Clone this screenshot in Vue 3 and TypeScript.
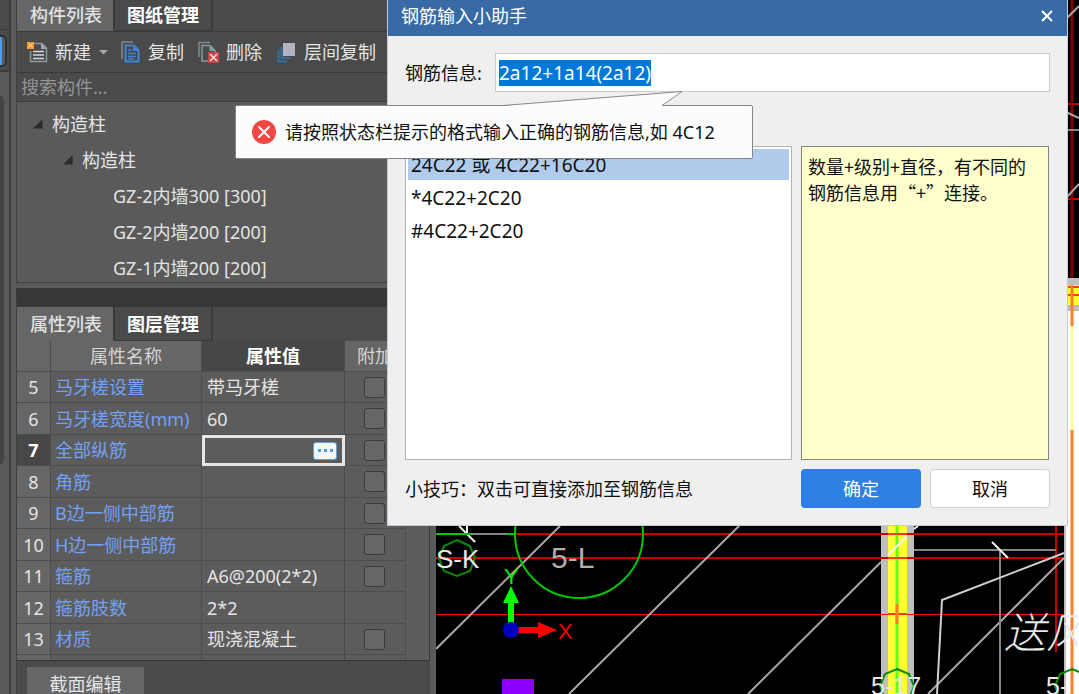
<script setup lang="ts">
import { onMounted, ref } from 'vue'

interface PropertyRow {
  no: number
  name: string
  value: string
  check: boolean
}

const rebar = ref('2a12+1a14(2a12)')
const rebarInput = ref<HTMLInputElement | null>(null)
const current = ref(0)

const members = ['GZ-2内墙300 [300]', 'GZ-2内墙200 [200]', 'GZ-1内墙200 [200]']
const formats = ['24C22 或 4C22+16C20', '*4C22+2C20', '#4C22+2C20']
const note = '数量+级别+直径，有不同的\n钢筋信息用“+”连接。'

const rows: PropertyRow[] = [
  { no: 5, name: '马牙槎设置', value: '带马牙槎', check: true },
  { no: 6, name: '马牙槎宽度(mm)', value: '60', check: true },
  { no: 7, name: '全部纵筋', value: '', check: true },
  { no: 8, name: '角筋', value: '', check: true },
  { no: 9, name: 'B边一侧中部筋', value: '', check: true },
  { no: 10, name: 'H边一侧中部筋', value: '', check: true },
  { no: 11, name: '箍筋', value: 'A6@200(2*2)', check: true },
  { no: 12, name: '箍筋肢数', value: '2*2', check: false },
  { no: 13, name: '材质', value: '现浇混凝土', check: true },
]

onMounted(() => {
  rebarInput.value?.focus()
  rebarInput.value?.select()
})
</script>

<template>
  <div class="app" lang="zh-CN">
    <div class="rail">
      <div class="rail-top"></div>
      <div class="rail-tool"><span class="rail-button"></span></div>
      <div class="rail-body"><span class="rail-thumb"></span></div>
    </div>

    <aside class="dock">
      <section class="members">
        <div class="tabs">
          <button class="tab active" type="button">构件列表</button>
          <button class="tab" type="button">图纸管理</button>
        </div>
        <div class="toolbar">
          <button class="tool" type="button">
            <svg width="22" height="22" viewBox="0 0 22 22">
              <path d="M8 2.5H16L20.5 7V20.5H4.500V10" fill="none" stroke="#8b999f" stroke-width="1.500" />
              <path d="M15 2V8H21Z" fill="#9fabb0" />
              <path d="M7 10.500H18M7 14H18M7 17.500H18" stroke="#d8d8d8" stroke-width="1.500" />
              <rect x="1" y="1" width="7" height="7" fill="#f49b2c" />
              <path d="M2.500 2.500L6.500 6.500M6.500 2.500L2.500 6.500" stroke="#ffe3a0" stroke-width="1" />
            </svg>
            <span>新建</span>
            <svg width="10" height="6" viewBox="0 0 10 6"><path d="M1 1H10L5.500 5.500Z" fill="#a8a8a8" /></svg>
          </button>
          <button class="tool" type="button">
            <svg width="20" height="22" viewBox="0 0 20 22">
              <path d="M1 18V1H12" fill="none" stroke="#7d8b93" stroke-width="1.500" />
              <path d="M4.500 4.500H13L17.500 9V20.500H4.500Z" fill="none" stroke="#3f83d1" stroke-width="2" />
              <path d="M12 4V10H18Z" fill="#3f83d1" />
              <path d="M7 9H11M7 12.500H15M7 15.500H15M7 18H13" stroke="#3f83d1" stroke-width="1.500" />
            </svg>
            <span>复制</span>
          </button>
          <button class="tool" type="button">
            <svg width="22" height="22" viewBox="0 0 22 22">
              <path d="M2 16V1.500H13" fill="none" stroke="#7d8b93" stroke-width="1.500" />
              <path d="M11 20H5V4.500H13L18 9.500V11" fill="none" stroke="#8b999f" stroke-width="1.500" />
              <path d="M12.500 4V10H18.500Z" fill="#8b999f" />
              <rect x="11" y="11" width="11" height="11" fill="#c9464c" />
              <path d="M13 13L20 20M20 13L13 20" stroke="#f3dede" stroke-width="1.500" />
            </svg>
            <span>删除</span>
          </button>
          <button class="tool" type="button">
            <svg width="22" height="22" viewBox="0 0 22 22">
              <path d="M3.500 9V20.500H12" fill="none" stroke="#2f6ea6" stroke-width="2" />
              <path d="M6.500 6V17H15" fill="none" stroke="#2f6ea6" stroke-width="2" />
              <rect x="8" y="2" width="12" height="13" fill="#b2b2c0" />
            </svg>
            <span>层间复制</span>
          </button>
        </div>
        <input class="search" type="text" placeholder="搜索构件..." aria-label="搜索构件" />
        <ul class="tree">
          <li class="node root">
            <svg width="10" height="10" viewBox="0 0 10 10"><path d="M9.500 0V9.500H0Z" fill="#2b2b2b" /></svg>
            构造柱
          </li>
          <li class="node branch">
            <svg width="10" height="10" viewBox="0 0 10 10"><path d="M9.500 0V9.500H0Z" fill="#2b2b2b" /></svg>
            构造柱
          </li>
          <li v-for="member in members" :key="member" class="node leaf">{{ member }}</li>
        </ul>
      </section>

      <section class="properties">
        <div class="tabs">
          <button class="tab active" type="button">属性列表</button>
          <button class="tab" type="button">图层管理</button>
        </div>
        <div class="grid">
          <table>
            <colgroup>
              <col class="c-no" /><col class="c-name" /><col class="c-value" /><col class="c-check" />
            </colgroup>
            <thead>
              <tr><th></th><th>属性名称</th><th class="current">属性值</th><th class="extra">附加</th></tr>
            </thead>
            <tbody>
              <tr v-for="row in rows" :key="row.no">
                <th scope="row" :class="{ current: row.no === 7 }">{{ row.no }}</th>
                <td class="name">{{ row.name }}</td>
                <td :class="{ editing: row.no === 7 }">
                  <button v-if="row.no === 7" class="more" type="button" aria-label="更多">
                    <svg width="16" height="4" viewBox="0 0 16 4">
                      <path d="M1 0H4V3H1ZM7 0H10V3H7ZM13 0H16V3H13Z" fill="#5b9bd3" />
                    </svg>
                  </button>
                  <template v-else>{{ row.value }}</template>
                </td>
                <td class="tick"><input v-if="row.check" type="checkbox" :aria-label="row.name + ' 附加'" /></td>
              </tr>
              <tr class="rest"><th></th><td></td><td></td><td></td></tr>
            </tbody>
          </table>
        </div>
        <div class="foot"><button class="foot-tab" type="button">截面编辑</button></div>
      </section>
    </aside>

    <main class="canvas">
      <svg class="drawing" viewBox="436 0 643 694" preserveAspectRatio="xMinYMin slice">
        <!-- walls -->
        <rect x="881" y="500" width="33" height="194" fill="#bfbfbf" />
        <rect x="888" y="500" width="19" height="194" fill="#ffff33" />
        <path d="M897 500V694" stroke="#66ff1a" stroke-width="3" />
        <rect x="1064" y="311" width="15" height="383" fill="#fff" />
        <path d="M1065 500V694" stroke="#bfbfbf" stroke-width="2" />
        <rect x="1060" y="278" width="19" height="33" fill="#bfbfbf" />
        <rect x="1060" y="285" width="19" height="20" fill="#ffff33" />
        <!-- axes -->
        <g stroke="#cc0000" stroke-width="2" fill="none">
          <path d="M515 534H1064M436 558H1064" />
          <path d="M1060 104H1079M1060 199H1079" />
          <path d="M1072 0V278" stroke="#850000" stroke-width="3" />
          <path d="M1056 526V652" />
        </g>
        <path d="M436 614.500H1064" stroke="#ff0000" />
        <path d="M888 534H907M888 558H907M888 614H907M1068 287H1079M1068 295H1079" stroke="#ff3a10" stroke-width="2" />
        <path d="M897 604V624M1072 285V326M1072 430V694" stroke="#ff7f27" stroke-width="3" />
        <path d="M1072 326V430" stroke="#ffff99" stroke-width="3" />
        <!-- outlines -->
        <g stroke="#a8a8a8" fill="none" stroke-width="2">
          <path d="M436 649L560 526M569 694L739 526M748 694L881 562M928 694L1064 558" />
          <path d="M914 550H1056M1000 550V694M471 534H507M1066 130H1079" stroke="#858585" />
          <path d="M1066 19L1079 6M1066 112L1079 118M1066 198L1079 184" />
        </g>
        <g stroke="#f2f2f2" fill="none" stroke-width="2">
          <path d="M888 555L907 536M914 529L918 526M992 542L1008 558M459 526L475 542M467 520V533" />
          <path d="M1064 553L942 600L937 694" stroke="#d0d0d0" />
        </g>
        <!-- grid bubbles -->
        <g stroke="#00c800" fill="none" stroke-width="2">
          <circle cx="579" cy="534" r="64" />
          <path d="M436 534H471M507 534H515" />
          <g stroke="#078a07">
            <path d="M457 540L470 546L475 558L470 571L457 576L444 571L439 558L444 546Z" />
            <path d="M897 669L909 674L914 686L909 699L885 699L880 686L885 674Z" />
            <path d="M1072 669L1084 674L1089 686L1084 699L1060 699L1055 686L1060 674Z" />
          </g>
        </g>
        <g class="label" fill="#e8e8e8">
          <text x="436" y="568" font-size="26">S-K</text>
          <text x="551" y="568" font-size="30" fill="#b0b0b0">5-L</text>
          <text x="871" y="695" font-size="25">5-17</text>
          <text x="1046" y="695" font-size="25">5-</text>
          <text x="1004" y="648" font-size="42" class="duct">送</text>
          <text x="1046" y="648" font-size="42" class="duct">风</text>
        </g>
        <!-- coordinate marker -->
        <path d="M508 623V603H503L511 586L519 603H514V623Z" fill="#00ff00" />
        <path d="M517 627H538V622L557 630L538 638V633H517Z" fill="#ff0000" />
        <circle cx="511" cy="630" r="8" fill="#0000c0" />
        <g class="label">
          <text x="504" y="584" font-size="22" fill="#00f000">Y</text>
          <text x="558" y="639" font-size="22" fill="#f00000">X</text>
        </g>
        <rect x="502" y="679" width="32" height="15" fill="#8b00ff" />
      </svg>
    </main>

    <div class="dialog" role="dialog" aria-labelledby="dialog-title">
      <header class="titlebar">
        <h1 id="dialog-title">钢筋输入小助手</h1>
        <button class="close" type="button" aria-label="关闭">
          <svg width="12" height="12" viewBox="0 0 12 12"><path d="M1 1L11 11M11 1L1 11" stroke="#fff" stroke-width="2" /></svg>
        </button>
      </header>
      <div class="body">
        <div class="field">
          <label for="rebar">钢筋信息:</label>
          <input id="rebar" ref="rebarInput" v-model="rebar" type="text" spellcheck="false" autocomplete="off" />
        </div>
        <div class="panes">
          <ul class="formats">
            <li v-for="(format, i) in formats" :key="format" :class="{ selected: i === current }" @click="current = i">
              {{ format }}
            </li>
          </ul>
          <p class="note">{{ note }}</p>
        </div>
        <footer class="actions">
          <p>小技巧：双击可直接添加至钢筋信息</p>
          <button class="ok" type="button">确定</button>
          <button class="cancel" type="button">取消</button>
        </footer>
      </div>
    </div>

    <div class="balloon" role="alert">
      <svg class="tail" width="182" height="16" viewBox="0 0 182 16">
        <path d="M0 16V15L179 1L159 15V16Z" fill="#fcfcfc" />
        <path d="M0 14.500L179 0.500L159 14.500" fill="none" stroke="#8a8a8a" />
      </svg>
      <svg width="24" height="24" viewBox="0 0 24 24">
        <circle cx="12" cy="12" r="12" fill="#f54646" />
        <path d="M7 7L17 17M17 7L7 17" stroke="#fff" stroke-width="2" stroke-linecap="round" />
      </svg>
      <span>请按照状态栏提示的格式输入正确的钢筋信息,如 4C12</span>
    </div>
  </div>
</template>

<style>
body {
  background: #5a5a5a;
}
</style>

<style scoped>
.app {
  position: relative;
  display: flex;
  height: 100vh;
  overflow: hidden;
  background: #5a5a5a;
  color: #e4e4e4;
  font-family: "Noto Sans", "Noto Sans CJK SC", sans-serif;
  font-size: 18px;
  line-height: 26px;
}
.app * {
  box-sizing: border-box;
}
button,
input {
  margin: 0;
  padding: 0;
  border: 0;
  background: none;
  color: inherit;
  font: inherit;
}
ul,
p,
h1 {
  margin: 0;
  padding: 0;
  list-style: none;
  font-size: inherit;
  font-weight: 400;
}
svg {
  display: block;
  flex: none;
}

.rail {
  display: flex;
  flex-direction: column;
  flex: none;
  width: 11px;
  border-right: 2px solid #3c3c3c;
}
.rail-top {
  height: 30px;
  background: #4a4a4a;
  border-bottom: 1px solid #3a3a3a;
}
.rail-tool {
  height: 42px;
  padding-top: 5px;
  background: #4a4a4a;
  border-bottom: 2px solid #3c3c3c;
}
.rail-button {
  display: block;
  width: 7px;
  height: 32px;
  border: 2px solid #303030;
  border-left: 0;
  border-radius: 0 5px 5px 0;
  background: linear-gradient(90deg, #4f9be8 2px, #5a5a5a 2px);
}
.rail-body {
  padding-top: 24px;
}
.rail-thumb {
  display: block;
  width: 4px;
  height: 368px;
  border-radius: 0 4px 4px 0;
  background: #444;
}

.dock {
  display: flex;
  flex-direction: column;
  flex: none;
  width: 414px;
  margin: 0 6px 0 5px;
}
.members {
  border: 1px solid #404040;
  border-top: 0;
}
.tabs {
  display: flex;
  background: #4a4a4a;
}
.tab {
  height: 31px;
  padding: 0 12px;
  border-right: 2px solid #3a3a3a;
  border-bottom: 1px solid #3a3a3a;
  color: #fff;
  font-weight: 700;
}
.tab.active {
  padding-left: 13px;
  padding-right: 11px;
  background: #666;
  border-bottom-color: #666;
  color: #e0e0e0;
  font-weight: 500;
}
.toolbar {
  display: flex;
  align-items: center;
  gap: 13px;
  height: 42px;
  padding-left: 9px;
  background: #4a4a4a;
  border-top: 1px solid #3a3a3a;
  border-bottom: 1px solid #3a3a3a;
}
.tool {
  display: flex;
  align-items: center;
  gap: 7px;
  white-space: nowrap;
}
.search {
  display: block;
  width: 100%;
  height: 29px;
  padding-left: 4px;
  background: #4a4a4a;
  border-bottom: 1px solid #3c3c3c;
}
.search::placeholder {
  color: #959595;
  opacity: 1;
}
.tree {
  height: 180px;
  padding-top: 4px;
  overflow: hidden;
}
.node {
  display: flex;
  align-items: center;
  gap: 9px;
  height: 36px;
}
.root {
  padding-left: 16px;
}
.branch {
  padding-left: 46px;
}
.leaf {
  padding-left: 96px;
}

.properties {
  display: flex;
  flex-direction: column;
  flex: 1;
  margin-top: 5px;
  border-top: 19px solid #383838;
  border-left: 1px solid #404040;
  background: #4a4a4a;
}
.properties .tab {
  height: 34px;
}
.grid {
  height: 320px;
  overflow: hidden;
  background: #5c5c5c;
  border-right: 1px solid #3a3a3a;
  border-bottom: 1px solid #353535;
}
table {
  width: 389px;
  table-layout: fixed;
  border-collapse: separate;
  border-spacing: 0;
}
.c-no {
  width: 34px;
}
.c-name {
  width: 151px;
}
.c-value {
  width: 143px;
}
.c-check {
  width: 61px;
}
th,
td {
  height: 31px;
  padding: 0;
  border-right: 1px solid #4d4d4d;
  border-bottom: 1px solid #4d4d4d;
  line-height: 26px;
  text-align: left;
  font-weight: 400;
  white-space: nowrap;
  overflow: hidden;
}
tbody tr:nth-child(even) > * {
  height: 32px;
}
th {
  background: #666;
  text-align: center;
}
thead th {
  color: #d4d4d4;
}
th.current {
  background: #474747;
  color: #fff;
  font-weight: 700;
}
th.extra {
  padding-left: 12px;
  text-align: left;
}
td {
  padding-left: 5px;
}
td.name {
  padding-left: 4px;
  color: #74a0f2;
}
td.editing {
  padding: 0 5px 0 0;
  border: 3px solid #e6e6e6;
}
.more {
  display: grid;
  place-items: center;
  width: 24px;
  height: 18px;
  margin-left: auto;
  border: 1px solid #5ba3e0;
  border-radius: 3px;
  background: #f2f7fc;
}
td.tick {
  padding-left: 19px;
}
.tick input {
  display: block;
  width: 21px;
  height: 21px;
  appearance: none;
  background: #666;
  border: 1px solid #3c3c3c;
  border-radius: 3px;
}
.foot {
  flex: 1;
  padding: 6px 0 0 10px;
}
.foot-tab {
  width: 117px;
  height: 34px;
  background: #666;
}

.canvas {
  flex: 1;
  min-width: 0;
  background: #000;
}
.drawing {
  width: 100%;
  height: 100%;
}
.label {
  font-family: "Liberation Sans", "Noto Sans CJK SC", sans-serif;
}
.duct {
  font-family: "Noto Sans CJK SC", sans-serif;
  font-style: italic;
  font-weight: 300;
}

.dialog {
  position: absolute;
  top: 0;
  left: 387px;
  right: 11px;
  background: #efefef;
  border: 1px solid #c3cbd8;
  border-top: 0;
  color: #111;
}
.titlebar {
  display: flex;
  align-items: center;
  justify-content: space-between;
  height: 36px;
  padding: 0 14px 4px 13px;
  background: #386ba5;
  color: #fff;
}
.body {
  padding: 17px;
}
.field {
  display: flex;
  align-items: center;
  gap: 13px;
}
.field label {
  width: 77px;
  white-space: nowrap;
}
.field input {
  flex: 1;
  min-width: 0;
  height: 39px;
  padding: 0 3px;
  background: #fff;
  border: 1px solid #c6ccd2;
  outline: none;
  font-size: 19px;
}
.field input::selection {
  background: #0078d7;
  color: #fff;
}
.panes {
  display: grid;
  grid-template-columns: 1fr 248px;
  gap: 9px;
  margin: 54px 1px 0 0;
}
.formats {
  display: flex;
  flex-direction: column;
  gap: 2px;
  height: 314px;
  padding: 2px;
  background: #fff;
  border: 1px solid #b4b4b4;
  font-size: 19px;
}
.formats li {
  height: 31px;
  padding: 3px;
}
.formats .selected {
  background: #b0cbec;
}
.note {
  padding: 6px;
  background: #ffffcd;
  border: 1px solid #858578;
  font-family: "Noto Sans CJK SC", sans-serif;
  white-space: pre;
}
.actions {
  display: flex;
  gap: 9px;
  align-items: center;
  margin-top: 9px;
}
.actions p {
  flex: 1;
}
.actions button {
  width: 120px;
  height: 39px;
  border-radius: 4px;
}
.ok {
  background: #2e80e2;
  color: #fff;
}
.actions .cancel {
  background: #fff;
  border: 1px solid #d2d2d2;
}

.balloon {
  position: absolute;
  top: 105px;
  left: 235px;
  display: flex;
  align-items: center;
  gap: 9px;
  width: 518px;
  height: 54px;
  padding-left: 16px;
  background: #fcfcfc;
  border: 1px solid #858585;
  border-radius: 2px;
  color: #111;
  white-space: nowrap;
}
.tail {
  position: absolute;
  bottom: 100%;
  left: 267px;
  margin-bottom: -1px;
}
</style>
